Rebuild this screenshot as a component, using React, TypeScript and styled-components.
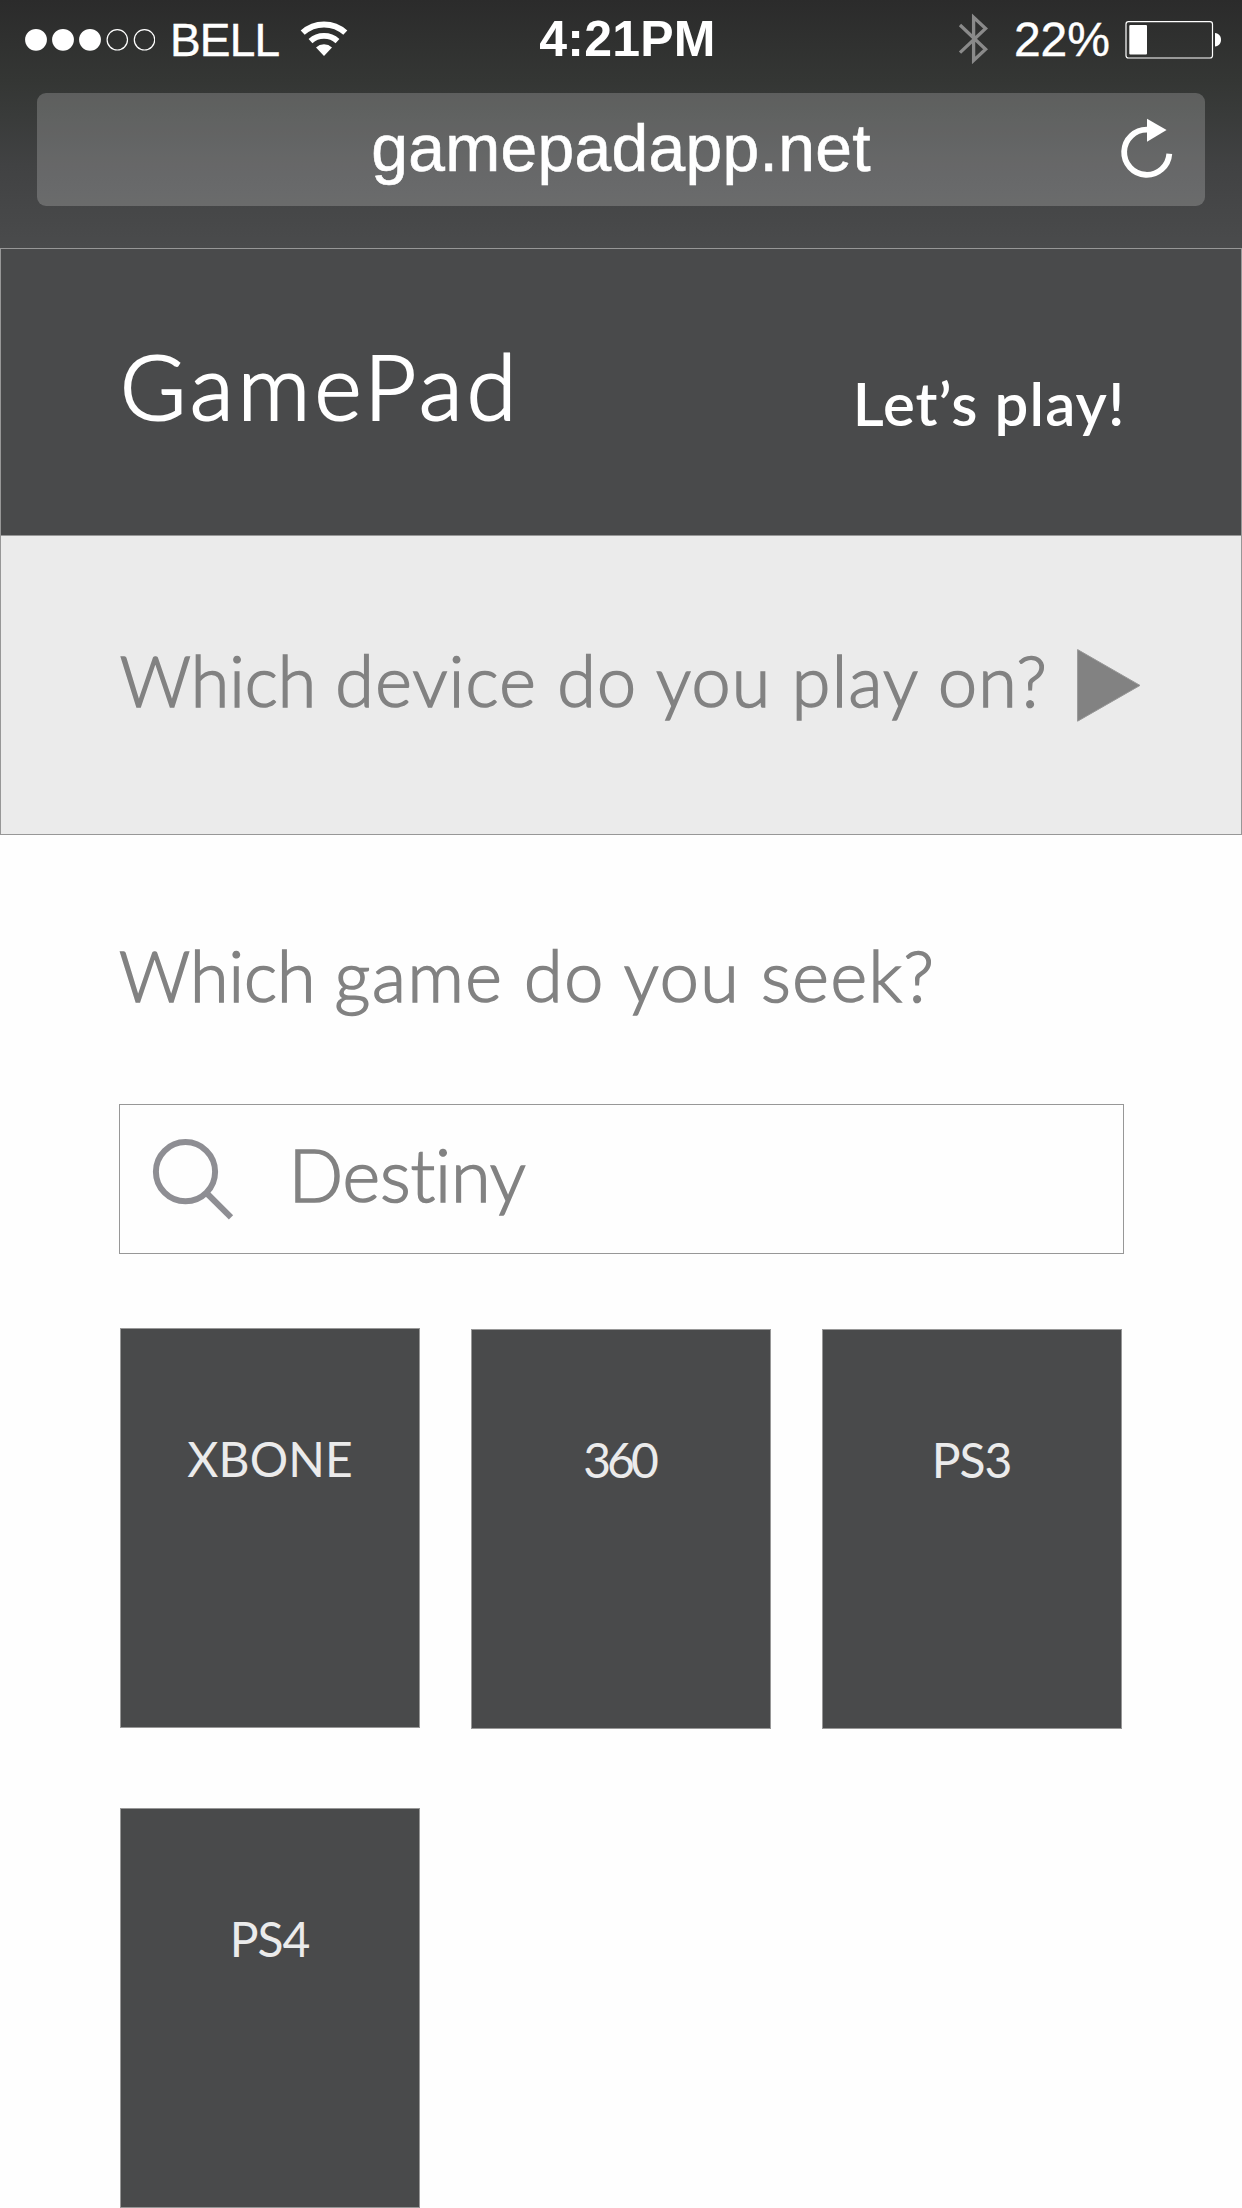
import React from 'react';
import styled, { createGlobalStyle } from 'styled-components';

const GlobalStyle = createGlobalStyle`
  * { box-sizing: border-box; }
  body { margin: 0; background: #fefefe; }
  svg { display: block; flex: none; }
`;

const humanist = 'Lato, "Open Sans", sans-serif';
const grotesque = '"Liberation Sans", Arial, sans-serif';

const Screen = styled.div`
  width: 1242px;
  height: 2208px;
  overflow: hidden;
  background: #fefefe;
  font-family: ${humanist};
`;

const BrowserChrome = styled.div`
  height: 248px;
  background: linear-gradient(#2b2b2b 0, #343634 80px, #393b3a 115px, #414243 165px, #4a4b4c 248px);
  font-family: ${grotesque};
  color: #fff;
`;

const StatusBar = styled.div`
  display: flex;
  align-items: center;
  height: 80px;
  padding: 0 20px 0 25px;
  margin-bottom: 13px;
`;

const Carrier = styled.span`
  margin: 0 20.6px 0 14.9px;
  font-size: 46px;
  line-height: 52px;
  letter-spacing: -0.8px;
  -webkit-text-stroke: 0.4px currentColor;
`;

const Clock = styled.span`
  margin-left: 191.5px;
  padding-bottom: 2px;
  font-size: 50px;
  font-weight: 700;
  line-height: 56px;
  letter-spacing: 0.2px;
`;

const StatusRight = styled.div`
  display: flex;
  align-items: center;
  margin-left: auto;
`;

const Charge = styled.span`
  margin: 0 15px 0 23.9px;
  padding-bottom: 2px;
  font-size: 48px;
  line-height: 53px;
  -webkit-text-stroke: 0.4px currentColor;
`;

const AddressBar = styled.div`
  display: grid;
  grid-template-columns: 1fr auto 1fr;
  align-items: center;
  height: 113px;
  margin: 0 37px;
  border-radius: 9px;
  background: rgba(255, 255, 255, 0.2);
`;

const Address = styled.span`
  grid-column: 2;
  padding-bottom: 3px;
  font-size: 66px;
  line-height: 74px;
  letter-spacing: 0.3px;
  -webkit-text-stroke: 0.6px currentColor;
`;

const ReloadButton = styled.button`
  justify-self: end;
  margin: 0 30px 0 0;
  padding: 0;
  border: 0;
  background: none;
`;

const Header = styled.header`
  display: flex;
  justify-content: space-between;
  align-items: flex-start;
  height: 288px;
  padding: 82px 115.4px 0 119px;
  border: 1px solid #979797;
  background: #494a4b;
  color: #fff;
`;

const Title = styled.h1`
  margin: 0;
  font-size: 90px;
  font-weight: 300;
  line-height: 108px;
  letter-spacing: 4.25px;
  -webkit-text-stroke: 2.2px currentColor;
`;

const Tagline = styled.span`
  margin-top: 36px;
  font-size: 60px;
  font-weight: 600;
  line-height: 72px;
  letter-spacing: 1.08px;
`;

const DevicePanel = styled.section`
  display: grid;
  grid-template-columns: 928.25px auto;
  justify-content: start;
  align-items: start;
  column-gap: 28px;
  height: 299px;
  padding: 102px 0 0 118.75px;
  border: 1px solid #979797;
  border-top: 0;
  background: #ebebeb;
`;

const Question = styled.h2<{ $tracking: number }>`
  margin: 0;
  color: #828282;
  font-size: 70px;
  font-weight: 300;
  line-height: 84px;
  letter-spacing: ${(p) => p.$tracking}px;
  white-space: nowrap;
  -webkit-text-stroke: 1.6px currentColor;
`;

const LeadWord = styled.span`
  letter-spacing: 0;
`;

const ExpandButton = styled.button`
  margin: 9px 0 0;
  padding: 0;
  border: 0;
  background: none;
`;

const GameSection = styled.main`
  padding: 98px 118px 0 119px;
`;

const SearchField = styled.div`
  display: flex;
  align-items: center;
  height: 150px;
  margin-top: 87px;
  padding-left: 30px;
  border: 1px solid #979797;
`;

const SearchText = styled.span`
  margin-left: 52.4px;
  padding-bottom: 10px;
  color: #828282;
  font-size: 72px;
  font-weight: 300;
  line-height: 86px;
  letter-spacing: -0.1px;
  -webkit-text-stroke: 1.6px currentColor;
`;

const PlatformGrid = styled.div`
  display: grid;
  grid-template-columns: repeat(3, 300px);
  grid-auto-rows: 400px;
  gap: 80px 51px;
  margin: 74px 0 0 1px;
`;

const PlatformTile = styled.div<{ $drop: number }>`
  display: flex;
  justify-content: center;
  align-items: flex-start;
  height: 400px;
  margin-top: ${(p) => p.$drop}px;
  padding-top: 101px;
  border: 1px solid #979797;
  background: #494a4b;
`;

const PlatformName = styled.span<{ $tracking: number }>`
  margin-right: ${(p) => -p.$tracking}px;
  color: #ebebeb;
  font-size: 48px;
  line-height: 57px;
  letter-spacing: ${(p) => p.$tracking}px;
`;

const platforms = [
  { name: 'XBONE', tracking: 0.1, drop: 0 },
  { name: '360', tracking: -4, drop: 1 },
  { name: 'PS3', tracking: -1.1, drop: 1 },
  { name: 'PS4', tracking: -1.1, drop: 0 },
];

const SignalDots = () => (
  <svg width="130" height="40" viewBox="25 20 130 40">
    {[36, 63, 90].map((x) => (
      <circle key={x} cx={x} cy="39.8" r="10.9" fill="#fff" />
    ))}
    {[117.3, 144.5].map((x) => (
      <circle key={x} cx={x} cy="39.8" r="10.2" fill="none" stroke="#fff" strokeWidth="1.2" />
    ))}
  </svg>
);

const WifiIcon = () => (
  <svg width="48" height="40" viewBox="300 20 48 40" fill="none" stroke="#fff">
    <path d="M302.7 32.6A31.7 31.7 0 0 1 345.3 32.6" strokeWidth="6" />
    <path d="M310.5 41.2A20 20 0 0 1 337.5 41.2" strokeWidth="5.7" />
    <path d="M324 56L316 47.4A11.8 11.8 0 0 1 332 47.4Z" fill="#fff" stroke="none" />
  </svg>
);

const BluetoothIcon = () => (
  <svg width="33" height="56" viewBox="957 12 33 56" fill="none" stroke="#8a8a8a" strokeWidth="3.3">
    <path d="M960 25L985.6 49.3L973.6 60.4V17.2L985.6 28.5L960 52.6" />
  </svg>
);

const BatteryIcon = () => (
  <svg width="97" height="40" viewBox="1125 20 97 40">
    <rect x="1126" y="21.7" width="86.5" height="36.3" rx="2.5" fill="none" stroke="#fff" strokeWidth="1.2" />
    <rect x="1129.3" y="25" width="17.7" height="29.6" rx="1" fill="#fff" />
    <path d="M1215 33C1223 33.5 1223 46 1215 46.5Z" fill="#fff" />
  </svg>
);

const ReloadIcon = () => (
  <svg width="56" height="68" viewBox="1119 115.5 56 68">
    <path d="M1147.2 129.1A22.6 22.6 0 1 0 1169.3 153.2" fill="none" stroke="#fff" strokeWidth="5.8" />
    <path d="M1147 118.2L1166.6 129.5L1147 141.3Z" fill="#fff" />
  </svg>
);

const ArrowIcon = () => (
  <svg width="67" height="77" viewBox="1076 647 67 77">
    <path d="M1077.6 649.6V721.2L1140 685.4Z" fill="#828282" stroke="#979797" />
  </svg>
);

const SearchIcon = () => (
  <svg width="86" height="84" viewBox="150 1137 86 84" fill="none" stroke="#8e8e93" strokeWidth="6">
    <circle cx="185.5" cy="1171.7" r="29.6" />
    <path d="M206.5 1193L231 1217.4" />
  </svg>
);

export default function App() {
  return (
    <Screen>
      <GlobalStyle />
      <BrowserChrome>
        <StatusBar>
          <SignalDots />
          <Carrier>BELL</Carrier>
          <WifiIcon />
          <Clock>4:21PM</Clock>
          <StatusRight>
            <BluetoothIcon />
            <Charge>22%</Charge>
            <BatteryIcon />
          </StatusRight>
        </StatusBar>
        <AddressBar>
          <Address>gamepadapp.net</Address>
          <ReloadButton aria-label="Reload">
            <ReloadIcon />
          </ReloadButton>
        </AddressBar>
      </BrowserChrome>
      <Header>
        <Title>GamePad</Title>
        <Tagline>Let’s play!</Tagline>
      </Header>
      <DevicePanel>
        <Question $tracking={1.27}>
          <LeadWord>Which </LeadWord>device do you play on?
        </Question>
        <ExpandButton aria-label="Choose device">
          <ArrowIcon />
        </ExpandButton>
      </DevicePanel>
      <GameSection>
        <Question $tracking={1.6}>
          <LeadWord>Which </LeadWord>game do you seek?
        </Question>
        <SearchField>
          <SearchIcon />
          <SearchText>Destiny</SearchText>
        </SearchField>
        <PlatformGrid>
          {platforms.map((p) => (
            <PlatformTile key={p.name} $drop={p.drop}>
              <PlatformName $tracking={p.tracking}>{p.name}</PlatformName>
            </PlatformTile>
          ))}
        </PlatformGrid>
      </GameSection>
    </Screen>
  );
}
